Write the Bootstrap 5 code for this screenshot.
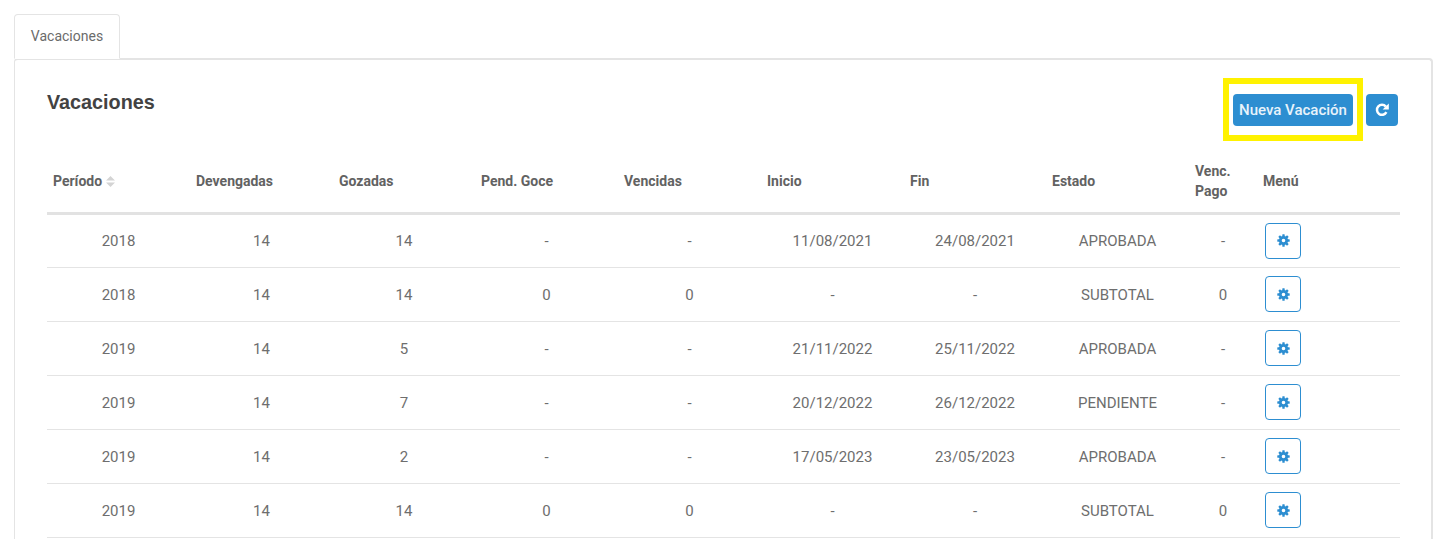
<!DOCTYPE html>
<html lang="es">
<head>
  <meta charset="UTF-8" />
  <title>Vacaciones</title>
  <meta name="viewport" content="width=device-width, initial-scale=1" />
  <link href="https://cdn.jsdelivr.net/npm/bootstrap@5.3.3/dist/css/bootstrap.min.css" rel="stylesheet" />
  <script src="https://cdn.jsdelivr.net/npm/bootstrap@5.3.3/dist/js/bootstrap.bundle.min.js"></script>
  <style>
    body { font-family: Roboto, "Liberation Sans", sans-serif; color: #5d5d5d; overflow: hidden; background: #fff; }
    .pagina { padding: 14px 12px 0 14px; }
    .pestanas { border-bottom: 0; height: 44px; }
    .pestanas .nav-link, .pestanas .nav-link.active { height: 45px; width: 106px; padding: 0; font-size: 14px; color: #6b6b6b; line-height: 43px; text-align: center; border: 1px solid #e4e4e4; border-bottom-color: #fff; border-radius: 4px 4px 0 0; background: #fff; position: relative; z-index: 1; }
    .tarjeta { border: 1px solid #e4e4e4; border-width: 2px 2px 0 1px; border-radius: 4px 4px 0 0; padding: 0 32px 0 32px; height: 490px; }
    .cabecera { height: 91px; }
    .titulo { font-family: "Liberation Sans", Arial, sans-serif; font-weight: 700; font-size: 19.8px; color: #424242; margin: 30px 0 0 0; line-height: 24px; }
    .marcado { border: 6px solid #fff200; width: 140px; height: 63px; margin-top: 18px; display: flex; align-items: center; justify-content: center; }
    .btn-azul { background: #2d8ed1; color: #e8f3fb; border: 0; border-radius: 4px; font-size: 15px; font-weight: 500; height: 32px; padding: 0; }
    .btn-nueva { width: 120px; white-space: nowrap; padding-top: 1px; }
    .btn-recarga { width: 32px; margin: 34px 1px 0 3px; padding-right: 1px; display: flex; align-items: center; justify-content: center; }
    .tabla-vac { table-layout: fixed; width: 1353px; margin: 0; color: #5d5d5d; }
    .tabla-vac th { font-size: 14px; font-weight: 700; color: #626262; padding: 0 6px; height: 62px; vertical-align: middle; border-bottom: 3px solid #e2e2e2; line-height: 20px; }
    .tabla-vac td { font-size: 15px; text-align: center; height: 54px; padding: 2px 0 0 0; vertical-align: middle; border-bottom: 1px solid #e4e4e4; color: #6e6e6e; }
    .tabla-vac td.celda-menu { text-align: left; padding: 0 0 0 8px; }
    .btn-engrane { width: 36px; height: 36px; padding: 0; border: 1px solid #2d8ed1; border-radius: 4px; background: #fff; display: flex; align-items: center; justify-content: center; }
    .orden { margin-left: 4px; vertical-align: -1px; }
  </style>
</head>
<body>
  <div class="pagina">
    <ul class="nav nav-tabs pestanas">
      <li class="nav-item"><a class="nav-link active" href="#">Vacaciones</a></li>
    </ul>
    <div class="tarjeta">
      <div class="d-flex justify-content-between cabecera">
        <h5 class="titulo">Vacaciones</h5>
        <div class="d-flex align-items-start">
          <div class="marcado"><button class="btn btn-azul btn-nueva">Nueva Vacación</button></div>
          <button class="btn btn-azul btn-recarga" aria-label="Recargar">
            <svg width="14" height="14" viewBox="0 0 14 14"><path d="M11.4 9.2A5 5 0 1 1 10.8 3.6" fill="none" stroke="#fff" stroke-width="2.5"/><path d="M13.8 0.4v6.2H7.6z" fill="#fff"/></svg>
          </button>
        </div>
      </div>
      <table class="table tabla-vac">
        <colgroup id="columnas"></colgroup>
        <thead>
          <tr>
            <th>Período<svg class="orden" width="9" height="11" viewBox="0 0 9 11"><path d="M4.5 0 9 4.5H0zM0 6.5h9L4.5 11z" fill="#d4d4d4"/></svg></th>
            <th>Devengadas</th>
            <th>Gozadas</th>
            <th>Pend. Goce</th>
            <th>Vencidas</th>
            <th>Inicio</th>
            <th>Fin</th>
            <th>Estado</th>
            <th>Venc.<br>Pago</th>
            <th>Menú</th>
          </tr>
        </thead>
        <tbody id="filas"></tbody>
      </table>
    </div>
  </div>

  <script>
    const anchos = [143, 143, 142, 143, 143, 143, 142, 143, 68, 143];
    document.getElementById("columnas").innerHTML = anchos.map(a => `<col style="width:${a}px">`).join("");

    const datos = [
      ["2018", "14", "14", "-", "-", "11/08/2021", "24/08/2021", "APROBADA", "-"],
      ["2018", "14", "14", "0", "0", "-", "-", "SUBTOTAL", "0"],
      ["2019", "14", "5", "-", "-", "21/11/2022", "25/11/2022", "APROBADA", "-"],
      ["2019", "14", "7", "-", "-", "20/12/2022", "26/12/2022", "PENDIENTE", "-"],
      ["2019", "14", "2", "-", "-", "17/05/2023", "23/05/2023", "APROBADA", "-"],
      ["2019", "14", "14", "0", "0", "-", "-", "SUBTOTAL", "0"]
    ];

    // engranaje de 8 dientes
    const dientes = Array.from({ length: 8 }, (_, i) => `<rect x="5.3" y="0.3" width="2.4" height="3" rx="0.5" transform="rotate(${i * 45} 6.5 6.5)"/>`).join("");
    const engrane = `<svg width="13" height="13" viewBox="0 0 13 13" fill="#2d8ed1">${dientes}<path fill-rule="evenodd" d="M6.5 1.9a4.6 4.6 0 1 0 0 9.2 4.6 4.6 0 0 0 0-9.2zm0 2.8a1.8 1.8 0 1 1 0 3.6 1.8 1.8 0 0 1 0-3.6z"/></svg>`;

    document.getElementById("filas").innerHTML = datos.map(f => `<tr>${f.map(c => `<td>${c}</td>`).join("")}<td class="celda-menu"><button class="btn btn-engrane" aria-label="Menú">${engrane}</button></td></tr>`).join("");
  </script>
</body>
</html>
